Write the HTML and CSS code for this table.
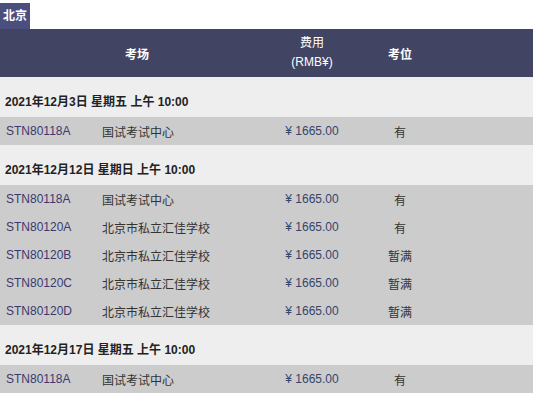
FILE: index.html
```html
<!DOCTYPE html>
<html lang="zh">
<head>
<meta charset="utf-8">
<link rel="stylesheet" href="styles.css">
</head>
<body>
<div class="city">北京</div>
<div class="head row">
  <div class="h-venue">考场</div>
  <div class="h-price">费用<br>(RMB¥)</div>
  <div class="h-seat">考位</div>
</div>

<div class="date">2021年12月3日 星期五 上午 10:00</div>
<div class="row data"><span class="code">STN80118A</span><span class="venue">国试考试中心</span><span class="price">¥ 1665.00</span><span class="seat">有</span></div>

<div class="date">2021年12月12日 星期日 上午 10:00</div>
<div class="row data"><span class="code">STN80118A</span><span class="venue">国试考试中心</span><span class="price">¥ 1665.00</span><span class="seat">有</span></div>
<div class="row data"><span class="code">STN80120A</span><span class="venue">北京市私立汇佳学校</span><span class="price">¥ 1665.00</span><span class="seat">有</span></div>
<div class="row data"><span class="code">STN80120B</span><span class="venue">北京市私立汇佳学校</span><span class="price">¥ 1665.00</span><span class="seat">暂满</span></div>
<div class="row data"><span class="code">STN80120C</span><span class="venue">北京市私立汇佳学校</span><span class="price">¥ 1665.00</span><span class="seat">暂满</span></div>
<div class="row data"><span class="code">STN80120D</span><span class="venue">北京市私立汇佳学校</span><span class="price">¥ 1665.00</span><span class="seat">暂满</span></div>

<div class="date">2021年12月17日 星期五 上午 10:00</div>
<div class="row data"><span class="code">STN80118A</span><span class="venue">国试考试中心</span><span class="price">¥ 1665.00</span><span class="seat">有</span></div>
</body>
</html>
```

FILE: styles.css
```css
html, body {
  margin: 0;
  padding: 0;
  background: #ffffff;
}
body {
  padding-top: 3px;
  font-family: "Liberation Sans", "Noto Sans CJK SC", sans-serif;
  font-size: 12px;
  color: #333333;
}
.city {
  display: inline-block;
  vertical-align: top;
  width: 30px;
  height: 26px;
  line-height: 26px;
  background: #4b4f7d;
  color: #ffffff;
  font-weight: bold;
  font-size: 12px;
  text-align: center;
}
.row {
  display: grid;
  grid-template-columns: 102px 172px 76px 100px 1fr;
  align-items: center;
}
.head {
  background: #414563;
  color: #ffffff;
  height: 48px;
}
.h-venue {
  grid-column: 1 / 3;
  text-align: center;
  font-weight: bold;
}
.h-price {
  grid-column: 3;
  text-align: center;
  line-height: 19px;
}
.h-seat {
  grid-column: 4;
  text-align: center;
  font-weight: bold;
}
.date {
  background: #eeeeee;
  height: 40px;
  box-sizing: border-box;
  padding: 17px 0 0 5px;
  font-weight: bold;
  color: #222222;
  line-height: 16px;
}
.data {
  background: #cccccc;
  height: 28px;
}
.code {
  padding-left: 6px;
  color: #3a3a6e;
}
.venue {
  color: #333333;
}
.price {
  text-align: center;
  color: #33446e;
  white-space: nowrap;
}
.seat {
  text-align: center;
  color: #333333;
}
```
